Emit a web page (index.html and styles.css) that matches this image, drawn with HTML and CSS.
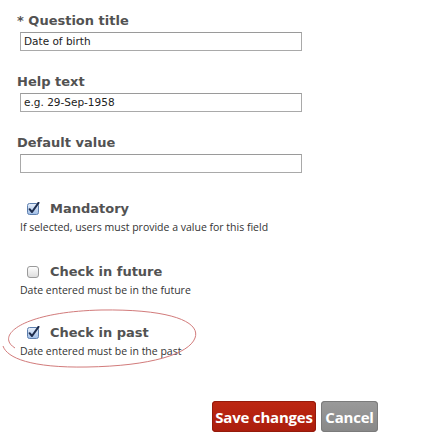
FILE: index.html
```html
<!DOCTYPE html>
<html>
<head>
<meta charset="utf-8">
<link rel="stylesheet" href="styles.css">
</head>
<body>
<div class="form">
  <div class="field">
    <label class="label">* Question title</label>
    <div class="input">Date of birth</div>
  </div>
  <div class="field">
    <label class="label">Help text</label>
    <div class="input">e.g. 29-Sep-1958</div>
  </div>
  <div class="field">
    <label class="label">Default value</label>
    <div class="input"></div>
  </div>

  <div class="check first">
    <div class="check-row">
      <svg class="box" width="13" height="13" viewBox="0 0 13 13">
        <defs>
          <linearGradient id="g1" x1="0" y1="0" x2="0" y2="1">
            <stop offset="0" stop-color="#e8f0fb"/>
            <stop offset="1" stop-color="#9fbde6"/>
          </linearGradient>
        </defs>
        <rect x="0.5" y="1.5" width="11" height="11" rx="2" fill="url(#g1)" stroke="#5d7fae"/>
        <path d="M2.6 7.2 L5 10 L11.5 0.8" fill="none" stroke="#1d2c4c" stroke-width="2" stroke-linecap="round" stroke-linejoin="round"/>
      </svg>
      <span class="check-label">Mandatory</span>
    </div>
    <div class="hint">If selected, users must provide a value for this field</div>
  </div>

  <div class="check second">
    <div class="check-row">
      <svg class="box" width="13" height="13" viewBox="0 0 13 13">
        <defs>
          <linearGradient id="g2" x1="0" y1="0" x2="0" y2="1">
            <stop offset="0" stop-color="#ffffff"/>
            <stop offset="1" stop-color="#dcdcdc"/>
          </linearGradient>
        </defs>
        <rect x="0.5" y="1.5" width="11" height="11" rx="2.5" fill="url(#g2)" stroke="#9a9a9a"/>
      </svg>
      <span class="check-label">Check in future</span>
    </div>
    <div class="hint">Date entered must be in the future</div>
  </div>

  <div class="check third circled">
    <svg class="loop" width="200" height="62" viewBox="0 0 200 62">
      <path d="M14 40 C -6 28, 20 4, 100 2 C 170 1, 200 14, 194 30 C 188 46, 150 58, 86 59 C 30 60, 6 50, 2 38" fill="none" stroke="#d27b7b" stroke-width="1"/>
    </svg>
    <div class="check-row">
      <svg class="box" width="13" height="13" viewBox="0 0 13 13">
        <rect x="0.5" y="1.5" width="11" height="11" rx="2" fill="url(#g1)" stroke="#5d7fae"/>
        <path d="M2.6 7.2 L5 10 L11.5 0.8" fill="none" stroke="#1d2c4c" stroke-width="2" stroke-linecap="round" stroke-linejoin="round"/>
      </svg>
      <span class="check-label">Check in past</span>
    </div>
    <div class="hint">Date entered must be in the past</div>
  </div>

  <div class="actions">
    <button class="btn save">Save changes</button>
    <button class="btn cancel">Cancel</button>
  </div>
</div>
</body>
</html>
```
FILE: styles.css
```css
html, body {
  margin: 0;
  padding: 0;
  background: #ffffff;
}
.form {
  padding: 13px 0 0 20px;
  width: 282px;
  font-family: "DejaVu Sans", sans-serif;
}
.field {
  margin-bottom: 23px;
}
.label {
  display: block;
  margin-left: -3px;
  font-family: "DejaVu Sans", sans-serif;
  font-weight: bold;
  font-size: 13px;
  line-height: 16px;
  color: #525252;
  margin-bottom: 3px;
}
.input {
  box-sizing: border-box;
  width: 282px;
  height: 19px;
  border: 1px solid #a9a9a9;
  border-top-color: #9a9a9a;
  font-size: 10.5px;
  line-height: 17px;
  padding-left: 3px;
  color: #222;
}
.check {
  position: relative;
}
.check.first {
  margin-top: 27px;
}
.check.second {
  margin-top: 29px;
}
.check.third {
  margin-top: 27px;
}
.check-row {
  display: flex;
  align-items: center;
  padding-left: 7px;
  height: 16px;
}
.box {
  display: block;
  margin-right: 10px;
}
.check-label {
  font-family: "DejaVu Sans", sans-serif;
  font-weight: bold;
  font-size: 13px;
  color: #525252;
}
.hint {
  margin-top: 4px;
  font-family: "Open Sans", sans-serif;
  font-size: 10.5px;
  line-height: 14px;
  color: #333;
}
.loop {
  position: absolute;
  left: -19px;
  top: -16px;
  pointer-events: none;
}
.actions {
  display: flex;
  gap: 5px;
  width: 170px;
  margin-top: 43px;
  margin-left: 192px;
}
.btn {
  flex: none;
  border: none;
  border-radius: 4px;
  height: 31px;
  padding: 0;
  white-space: nowrap;
  font-family: "Open Sans", sans-serif;
  font-weight: 700;
  font-size: 15px;
  letter-spacing: -0.2px;
  color: #ffffff;
}
.save {
  background: linear-gradient(#bd2712, #ab1d0d);
  width: 104px;
  box-shadow: inset 0 0 0 1px #951a0b;
}
.cancel {
  background: linear-gradient(#9a9a9a, #888888);
  width: 57px;
  box-shadow: inset 0 0 0 1px #7b7b7b;
}
```
